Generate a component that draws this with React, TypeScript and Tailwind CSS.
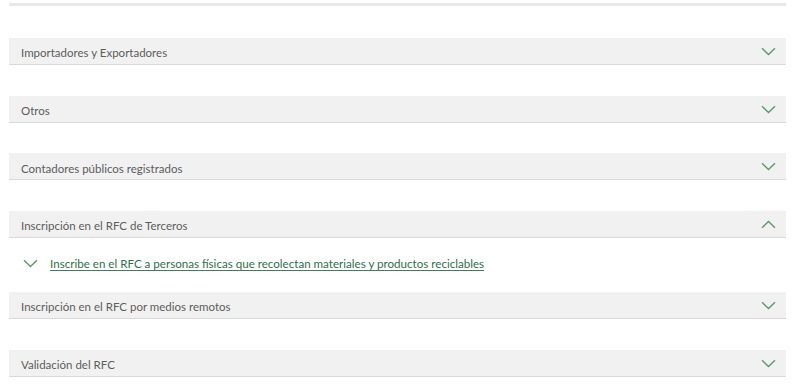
const sections = [
  { title: 'Importadores y Exportadores', open: false },
  { title: 'Otros', open: false },
  { title: 'Contadores públicos registrados', open: false },
  { title: 'Inscripción en el RFC de Terceros', open: true },
  { title: 'Inscripción en el RFC por medios remotos', open: false },
  { title: 'Validación del RFC', open: false },
]

function Chevron({ up = false }: { up?: boolean }) {
  return (
    <svg width="15" height="9" viewBox="0 0 15 9" fill="none" className={up ? 'rotate-180' : ''}>
      <path d="M1 1.2 7.5 7.5 14 1.2" stroke="#5a9a64" strokeWidth="1.4" />
    </svg>
  )
}

export default function App() {
  return (
    <div className="bg-white w-[800px] h-[387px] overflow-hidden font-['Lato',sans-serif]">
      <div className="ml-[9px] w-[777px] pt-[3px]">
        {/* top rule */}
        <div className="h-[3px] bg-[#e8e8e8]" />

        <div className="pt-[32px] flex flex-col">
          {sections.map((s) => (
            <div key={s.title} className={s.open ? 'mb-0' : 'mb-[30.67px]'}>
              <div className="h-[27px] bg-[#f1f1f1] border-b border-[#d9d9d9] flex items-center justify-between pl-[12px] pr-[10px]">
                <span className="text-[11.5px] text-[#5c5c5c] pt-[4px]">{s.title}</span>
                <span className="pt-[1px]">
                  <Chevron up={s.open} />
                </span>
              </div>
              {s.open && (
                <div className="h-[54px] flex items-center pl-[14px] gap-[12px] pb-[2px]">
                  <Chevron />
                  <a href="#" className="text-[11.6px] text-[#2f7049] underline underline-offset-2 decoration-[#3d8056]">
                    Inscribe en el RFC a personas físicas que recolectan materiales y productos reciclables
                  </a>
                </div>
              )}
            </div>
          ))}
        </div>
      </div>
    </div>
  )
}
